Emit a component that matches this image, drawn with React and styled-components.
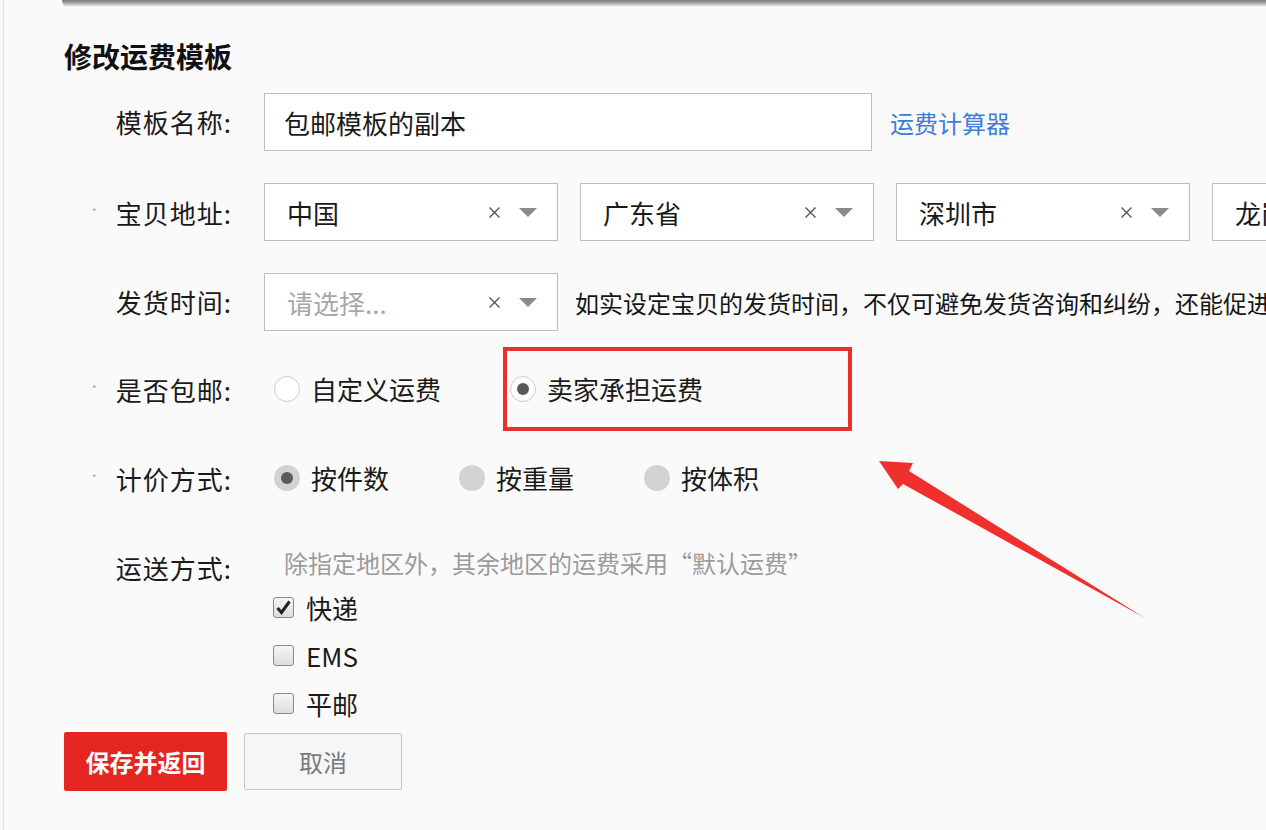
import React from 'react';
import styled, {createGlobalStyle} from 'styled-components';

const GlobalStyle = createGlobalStyle`
  html, body {
    margin: 0;
    padding: 0;
    background: #fafafa;
  }
  body {
    font-family: "Noto Sans CJK SC", "Noto Sans", sans-serif;
    color: #1a1a1a;
  }
  * {
    box-sizing: border-box;
  }
`

const Page = styled.div`
  position: relative;
  width: 1266px;
  height: 830px;
  overflow: hidden;
  background: #fafafa;
  box-shadow: inset 3px 0 0 #fafafa, inset 4px 0 0 #e3e3e3;
`
const TopShadow = styled.div`
  margin-left: 62px;
  height: 7px;
  border-bottom-left-radius: 6px;
  background: linear-gradient(to bottom, #7c7c7c 0%, #a2a2a2 40%, #d6d6d6 75%, rgba(250, 250, 250, 0) 100%);
`
const Form = styled.div`
  padding-left: 64px;
`
const Title = styled.h2`
  margin: 29px 0 0;
  font-size: 28px;
  line-height: 40px;
  font-weight: 700;
  color: #111;
`
const Row = styled.div`
  display: flex;
  align-items: ${p => p.$top ? 'flex-start' : 'center'};
  margin-top: ${p => p.$gap}px;
  min-height: ${p => p.$height || 58}px;
  white-space: nowrap;
`
const Label = styled.div`
  flex: none;
  width: 168px;
  text-align: right;
  font-size: 26px;
  line-height: 40px;
  letter-spacing: 1px;
  color: #1a1a1a;
`
const Star = styled.span`
  font-size: 10px;
  color: #e88a8a;
  vertical-align: 8px;
  margin-right: 18px;
`
const Field = styled.div`
  flex: none;
  display: flex;
  align-items: center;
  margin-left: 32px;
  gap: ${p => p.$gap || 0}px;
`
const FieldColumn = styled.div`
  flex: none;
  display: flex;
  flex-direction: column;
  margin-left: 32px;
`
const TextBox = styled.div`
  width: 608px;
  height: 58px;
  border: 1px solid #bdbdbd;
  background: #fff;
  padding-left: 19px;
  display: flex;
  align-items: center;
  font-size: 26px;
  color: #1a1a1a;
`
const Link = styled.a`
  margin-left: 18px;
  font-size: 24px;
  color: #3c7dd8;
  cursor: pointer;
`
const SelectBox = styled.div`
  flex: none;
  width: 294px;
  height: 58px;
  border: 1px solid #bdbdbd;
  background: #fff;
  display: flex;
  align-items: center;
  gap: 18px;
  padding: 0 20px 0 22px;
`
const SelectValue = styled.span`
  flex: 1;
  font-size: 26px;
  color: ${p => p.$placeholder ? '#aca5aa' : '#1a1a1a'};
`
const Hint = styled.span`
  margin-left: 17px;
  font-size: 24px;
  color: #161616;
`
const Option = styled.label`
  display: flex;
  align-items: center;
  gap: 11px;
  font-size: 26px;
  line-height: 40px;
  color: #1a1a1a;
  padding-left: ${p => p.$indent || 0}px;
`
const RadioCircle = styled.span`
  flex: none;
  width: 26px;
  height: 26px;
  border-radius: 50%;
  display: flex;
  align-items: center;
  justify-content: center;
  background: ${p => p.$disabled ? '#d2d2d2' : '#fff'};
  border: ${p => p.$disabled ? 'none' : '1px solid #cdcdcd'};

  &::after {
    content: '';
    width: 12px;
    height: 12px;
    border-radius: 50%;
    background: #5e5858;
    display: ${p => p.$checked ? 'block' : 'none'};
  }
`
const Highlight = styled.div`
  width: 349px;
  height: 84px;
  border: 4px solid #e8312f;
  padding-left: 3px;
  display: flex;
  align-items: center;
`
const MutedHint = styled.div`
  margin-left: 20px;
  margin-bottom: 5px;
  font-size: 24px;
  line-height: 30px;
  color: #9b9b9b;
`
const CheckItem = styled.label`
  height: 48px;
  display: flex;
  align-items: center;
  gap: 12px;
  padding-left: 9px;
  font-size: 26px;
  color: #1a1a1a;
`
const CheckBox = styled.span`
  flex: none;
  width: 21px;
  height: 21px;
  border: 1px solid #8a8a8a;
  border-radius: 3px;
  background: linear-gradient(#f6f6f6, #dcdcdc);
  display: flex;
  align-items: center;
  justify-content: center;
`
const Actions = styled.div`
  display: flex;
  align-items: flex-start;
  gap: 17px;
  margin-top: 5px;
`
const Button = styled.button`
  font-family: inherit;
  font-size: 24px;
  cursor: pointer;
  border-radius: 2px;
  width: ${p => p.$primary ? 163 : 158}px;
  height: ${p => p.$primary ? 59 : 57}px;
  margin-top: ${p => p.$primary ? 0 : 1}px;
  background: ${p => p.$primary ? '#e52521' : '#f6f6f6'};
  color: ${p => p.$primary ? '#fff' : '#7a7a7a'};
  font-weight: ${p => p.$primary ? 700 : 400};
  border: ${p => p.$primary ? 'none' : '1px solid #c6c6c6'};
`
const Arrow = styled.svg`
  position: absolute;
  left: 870px;
  top: 455px;
  pointer-events: none;
`

function Select({value, placeholder}) {
    return (
        <SelectBox>
            <SelectValue $placeholder={!value}>{value || placeholder}</SelectValue>
            <svg width="13" height="13" viewBox="0 0 13 13">
                <path d="M1.5 1.5 L11.5 11.5 M11.5 1.5 L1.5 11.5" stroke="#555" strokeWidth="1.4"/>
            </svg>
            <svg width="18" height="9" viewBox="0 0 18 9">
                <path d="M0 0 H18 L9 9 Z" fill="#8a8a8a"/>
            </svg>
        </SelectBox>
    );
}

function Radio({checked, disabled, children, indent}) {
    return (
        <Option $indent={indent}>
            <RadioCircle $checked={checked} $disabled={disabled}/>
            {children}
        </Option>
    );
}

function Check({checked, children}) {
    return (
        <CheckItem>
            <CheckBox>
                {checked && (
                    <svg width="17" height="17" viewBox="0 0 17 17">
                        <path d="M2.5 9 L6.5 13.5 L14.5 2.5" stroke="#222" strokeWidth="3" fill="none"/>
                    </svg>
                )}
            </CheckBox>
            {children}
        </CheckItem>
    );
}

export default function App() {
    return (
        <>
            <GlobalStyle/>
            <Page>
                <TopShadow/>
                <Form>
                    <Title>修改运费模板</Title>

                    <Row $gap={17}>
                        <Label>模板名称:</Label>
                        <Field>
                            <TextBox>包邮模板的副本</TextBox>
                            <Link>运费计算器</Link>
                        </Field>
                    </Row>

                    <Row $gap={32}>
                        <Label><Star>*</Star>宝贝地址:</Label>
                        <Field $gap={22}>
                            <Select value="中国"/>
                            <Select value="广东省"/>
                            <Select value="深圳市"/>
                            <Select value="龙岗区"/>
                        </Field>
                    </Row>

                    <Row $gap={32}>
                        <Label>发货时间:</Label>
                        <Field>
                            <Select placeholder="请选择..."/>
                            <Hint>如实设定宝贝的发货时间，不仅可避免发货咨询和纠纷，还能促进成交</Hint>
                        </Field>
                    </Row>

                    <Row $gap={16} $height={84}>
                        <Label><Star>*</Star>是否包邮:</Label>
                        <Field $gap={62}>
                            <Radio indent={10}>自定义运费</Radio>
                            <Highlight>
                                <Radio checked>卖家承担运费</Radio>
                            </Highlight>
                        </Field>
                    </Row>

                    <Row $gap={18}>
                        <Label><Star>*</Star>计价方式:</Label>
                        <Field $gap={70}>
                            <Radio indent={10} checked disabled>按件数</Radio>
                            <Radio disabled>按重量</Radio>
                            <Radio disabled>按体积</Radio>
                        </Field>
                    </Row>

                    <Row $gap={41} $height={40} $top>
                        <Label>运送方式:</Label>
                        <FieldColumn>
                            <MutedHint>除指定地区外，其余地区的运费采用“默认运费”</MutedHint>
                            <Check checked>快递</Check>
                            <Check>EMS</Check>
                            <Check>平邮</Check>
                        </FieldColumn>
                    </Row>

                    <Actions>
                        <Button $primary>保存并返回</Button>
                        <Button>取消</Button>
                    </Actions>
                </Form>

                <Arrow width="290" height="170" viewBox="0 0 290 170">
                    <polygon points="9,6 43,8 39,16 275,163 33,29 28,34" fill="#f0302c"/>
                </Arrow>
            </Page>
        </>
    );
}
